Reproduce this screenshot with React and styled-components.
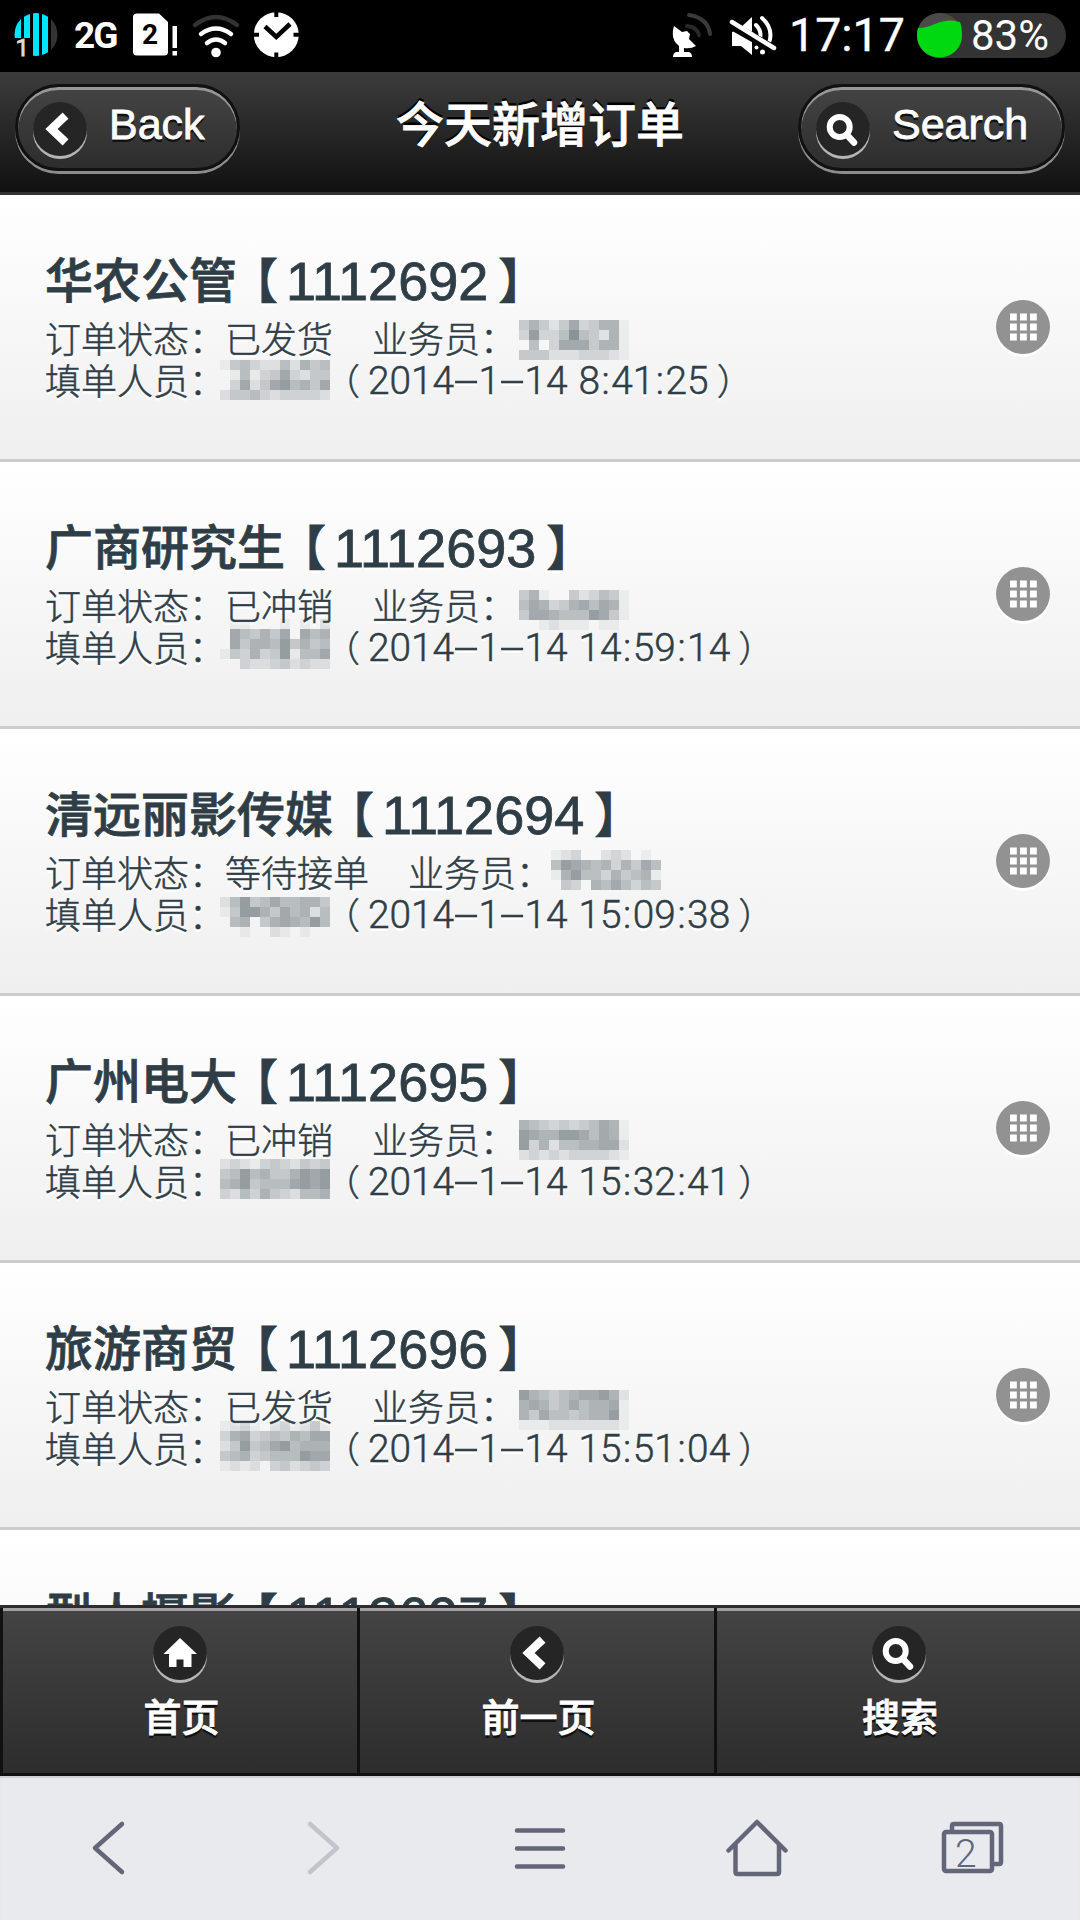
import React from "react";
import styled, { createGlobalStyle, css } from "styled-components";

const GlobalStyle = createGlobalStyle`
  * {
    box-sizing: border-box;
  }
  body {
    margin: 0;
    background: #000;
    font-family: "Liberation Sans", "Noto Sans CJK SC", sans-serif;
  }
`;

const Screen = styled.div`
  width: 1080px;
  height: 1920px;
  display: flex;
  flex-direction: column;
  overflow: hidden;
`;

const StatusBar = styled.div`
  height: 72px;
  flex: none;
  display: flex;
  justify-content: space-between;
  background: #000;
  color: #fff;
  font-family: Roboto, sans-serif;
`;

const StatusGroup = styled.div`
  display: flex;
  align-items: center;
  height: 70px;
`;

const Clock = styled.span`
  width: 131px;
  font-size: 46.5px;
  line-height: 72px;
  padding-left: 3px;
  margin-top: -1px;
  -webkit-text-stroke: 0.4px #fff;
`;

const Battery = styled.div`
  display: flex;
  align-items: center;
  width: 149px;
  height: 45px;
  margin-right: 14px;
  border-radius: 23px;
  background: #333;
  font-size: 42px;
`;

const BatteryText = styled.span`
  margin-left: 8px;
`;

const Header = styled.header`
  height: 123px;
  flex: none;
  display: flex;
  justify-content: space-between;
  padding: 12px 15px 0;
  background: linear-gradient(#3c3c3c, #111);
  border-bottom: 3px solid #333;
  color: #fff;
`;

const Title = styled.h1`
  margin: 0 0 0 42px;
  padding-top: 7px;
  font-size: 48px;
  font-weight: 500;
  line-height: 70px;
  -webkit-text-stroke: 0.8px #fff;
  text-shadow: 0 -3px 0 #000;
`;

const HeaderButton = styled.button`
  display: flex;
  align-items: flex-start;
  width: ${(props) => props.$width}px;
  height: 87px;
  padding: 15px 0 0 15px;
  border: 3px solid #111;
  border-radius: 48px;
  background: linear-gradient(#444, #2d2d2d);
  box-shadow: inset 0 3px 0 rgba(255, 255, 255, 0.45),
    0 3px 0 rgba(255, 255, 255, 0.5);
  color: #fff;
  font-family: inherit;
  font-size: 43px;
  line-height: 48px;
  -webkit-text-stroke: 0.8px #fff;
  text-shadow: 0 3px 0 #111;
`;

const HeaderLabel = styled.span`
  margin: -2px 0 0 ${(props) => props.$gap}px;
`;

const Disc = styled.span`
  flex: none;
  display: block;
  width: 54px;
  height: 54px;
  border-radius: 50%;
  background: ${(props) => (props.$light ? "#929292" : "#252525")};
  box-shadow: 0 3px 0 ${(props) => (props.$light ? "#fff" : "#b5b5b5")};

  svg {
    display: block;
  }
`;

const List = styled.ul`
  flex: 1;
  min-height: 0;
  margin: 0;
  padding: 0;
  list-style: none;
  overflow: hidden;
  background: #fff;
`;

const Item = styled.li`
  display: flex;
  justify-content: space-between;
  align-items: center;
  height: 267px;
  padding: 0 30px 0 45px;
  border-bottom: 3px solid #ccc;
  background: linear-gradient(#fff, #efefef);
  color: #2f3e46;
  text-shadow: 0 3px 0 #fff;
`;

const Info = styled.div`
  height: 264px;
  padding-top: 51px;
`;

const Name = styled.h3`
  display: flex;
  margin: 0;
  height: 70px;
  font-size: 48px;
  font-weight: 500;
  line-height: 72px;
  white-space: nowrap;
  -webkit-text-stroke: 0.8px #2f3e46;
`;

const Bracket = styled.span`
  width: 48px;
  text-indent: ${(props) => props.$shift}px;
`;

const OrderNo = styled.span`
  margin-left: 1px;
  font-size: 54px;
  line-height: 71px;
`;

const Line = styled.p`
  display: flex;
  margin: 0;
  height: 42px;
  font-size: 36px;
  line-height: 42px;
  font-weight: 300;
  font-family: "Noto Sans CJK SC", sans-serif;
  white-space: nowrap;
  -webkit-text-stroke: 0.5px #2f3e46;
`;

const Sales = styled.span`
  margin-left: 39px;
`;

const DateText = styled.span`
  font-family: Roboto, sans-serif;
  font-size: 38.8px;
  font-weight: 300;
  line-height: 45px;
  word-spacing: 1.5px;
`;

const Dash = styled.span`
  display: inline-block;
  width: 24.4px;
  text-align: center;
  transform: scaleX(2.3);
`;

const Colon = styled.span`
  display: inline-block;
  width: 11.3px;
  text-align: center;
`;

const Paren = styled.span`
  width: 36px;
  text-indent: ${(props) => props.$shift}px;
`;

const MaskBox = styled.span`
  flex: none;
  width: ${(props) => props.$width}px;
  height: 40px;

  svg {
    display: block;
    overflow: visible;
  }
`;

const Footer = styled.nav`
  flex: none;
  display: grid;
  grid-template-columns: 357px 357px 1fr;
  height: 171px;
  border-top: 3px solid #2d2d2d;
`;

const FooterButton = styled.button`
  display: flex;
  flex-direction: column;
  align-items: center;
  padding: 18px 0 0;
  border: 0 solid #111;
  border-left-width: 3px;
  border-bottom-width: 3px;
  background: linear-gradient(#444, #2d2d2d);
  box-shadow: inset 0 3px 0 #a5a2a5;
  color: #fff;
  font-family: inherit;
  font-size: 38px;
  font-weight: 500;
  line-height: 56px;
  -webkit-text-stroke: 0.8px #fff;
  text-shadow: 0 3px 0 #111;
`;

const FooterLabel = styled.span`
  margin: 10px 0 0 3px;
`;

const toolLine = css`
  fill: none;
  stroke: #626678;
  stroke-width: 4.5;
  stroke-linecap: round;
  stroke-linejoin: round;
`;

const Toolbar = styled.div`
  flex: none;
  display: grid;
  grid-template-columns: repeat(5, 1fr);
  height: 144px;
  background: #e8eaee;
  box-shadow: inset 0 2px 1px #cfcfd2;
`;

const Tool = styled.svg`
  width: 216px;
  height: 144px;
  opacity: ${(props) => (props.$disabled ? 0.28 : 1)};
  ${toolLine}

  text {
    stroke: none;
    fill: #626678;
    font-family: Roboto, sans-serif;
    font-size: 39px;
    font-weight: 300;
  }
`;

const glyphs = {
  back: (
    <path
      d="M29.5 16.5 L18.5 27 L29.5 37.5"
      fill="none"
      stroke="#fff"
      strokeWidth="8.5"
      strokeLinecap="square"
    />
  ),
  search: (
    <g fill="none" stroke="#fff">
      <circle cx="23.7" cy="25" r="10" strokeWidth="6" />
      <path d="M31 33 L38 40.5" strokeWidth="6.5" strokeLinecap="round" />
    </g>
  ),
  home: (
    <path
      d="M27 12 L44 28 H38.5 V41 H30.5 V33.5 H23.5 V41 H16 V28 H10.5 Z"
      fill="#fff"
    />
  ),
  grid: (
    <g fill="#fff">
      {[13.5, 23.5, 33.5].map((y) =>
        [14, 24, 34].map((x) => (
          <rect key={x + "-" + y} x={x} y={y} width="6.8" height="7" />
        ))
      )}
    </g>
  ),
};

const RoundIcon = ({ name, light }) => (
  <Disc $light={light}>
    <svg width="54" height="54" viewBox="0 0 54 54">
      {glyphs[name]}
    </svg>
  </Disc>
);

// Pixelated block over a person's name, one digit per 10px cell.
const Mask = ({ rows, width, left = 0, top = 0 }) => (
  <MaskBox $width={width}>
    <svg width="120" height="50" viewBox="0 0 120 50">
      <g transform={`translate(${left} ${top})`} shapeRendering="crispEdges">
        {rows.map((row, y) =>
          row.split("").map((level, x) =>
            level === "0" ? null : (
              <rect
                key={x + "-" + y}
                x={x * 10}
                y={y * 10}
                width="10"
                height="10"
                fill={`rgba(47, 62, 70, ${level * 0.06})`}
              />
            )
          )
        )}
      </g>
    </svg>
  </MaskBox>
);

const orders = [
  {
    name: "华农公管",
    no: "1112692",
    status: "已发货",
    date: "2014-1-14 8:41:25",
    sales: ["46424734661", "38335954261", "05037774661", "44422233321"],
    salesTop: 4,
    writer: ["14532252645", "01513473244", "03724785647", "24453233332"],
    writerTop: 2,
  },
  {
    name: "广商研究生",
    no: "1112693",
    status: "已冲销",
    date: "2014-1-14 14:59:14",
    sales: ["46100423541", "57634675761", "47765558741", "00121110110"],
    salesTop: 7,
    writer: ["01100010102", "07546470756", "07466584645", "14363481557", "00322342322"],
    writerTop: -6,
  },
  {
    name: "清远丽影传媒",
    no: "1112694",
    status: "等待接单",
    date: "2014-1-14 15:09:38",
    sales: ["12300232010", "58765636475", "16855364561", "04306575354"],
    salesLeft: -1,
    salesTop: 0,
    writer: ["25845755664", "14886475625", "05604676585", "00100210100"],
    writerTop: 5,
  },
  {
    name: "广州电大",
    no: "1112695",
    status: "已冲销",
    date: "2014-1-14 15:32:41",
    sales: ["65434345761", "87668875761", "83625566772", "23232333321"],
    salesTop: 3,
    writer: ["23213432434", "45856446878", "56845557878", "32536432556"],
    writerTop: 0,
  },
  {
    name: "旅游商贸",
    no: "1112696",
    status: "已发货",
    date: "2014-1-14 15:51:04",
    sales: ["86545677862", "67645756671", "64755456681", "11122222221"],
    salesTop: 6,
    writer: ["12310231241", "36734546577", "24845785666", "45634555877", "12120342343"],
    writerTop: -5,
  },
  { name: "型人摄影", no: "1112697" },
];

const separators = {
  "-": Dash,
  ":": Colon,
};

const OrderDate = ({ value }) => (
  <DateText>
    {value.split(/([-:])/).map((part, i) => {
      const Separator = separators[part];
      return Separator ? <Separator key={i}>{part}</Separator> : part;
    })}
  </DateText>
);

const OrderItem = ({ order }) => (
  <Item>
    <Info>
      <Name>
        {order.name}
        <Bracket $shift={-7}>【</Bracket>
        <OrderNo>{order.no}</OrderNo>
        <Bracket $shift={10}>】</Bracket>
      </Name>
      {order.status && (
        <>
          <Line>
            订单状态：{order.status}
            <Sales>业务员：</Sales>
            <Mask
              rows={order.sales}
              width={110}
              left={order.salesLeft || 3}
              top={order.salesTop}
            />
          </Line>
          <Line>
            填单人员：
            <Mask rows={order.writer} width={107} left={-5} top={order.writerTop} />
            <Paren $shift={-8}>（</Paren>
            <OrderDate value={order.date} />
            <Paren $shift={8}>）</Paren>
          </Line>
        </>
      )}
    </Info>
    <RoundIcon name="grid" light />
  </Item>
);

const StatusIcons = () => (
  <svg width="310" height="70" viewBox="0 0 310 70">
    <defs>
      <clipPath id="disc">
        <circle cx="36" cy="34.5" r="21.5" />
      </clipPath>
    </defs>
    <g clipPath="url(#disc)" fill="#00e5ff">
      <rect x="14" y="12" width="7" height="26" />
      <rect x="24" y="12" width="6" height="26" />
      <rect x="33" y="12" width="6" height="45" />
      <rect x="42" y="12" width="6" height="45" />
      <rect x="51" y="12" width="7" height="45" fill="#333" />
    </g>
    <text x="15.5" y="56" fill="#ddd" stroke="#ddd" strokeWidth="0.8" fontSize="24">
      1
    </text>
    <text x="74" y="48" fill="#fff" fontSize="37" fontWeight="700" letterSpacing="-2">
      2G
    </text>
    <path
      d="M137 13.5 H159 L168 22 V52 Q168 55.5 164 55.5 H137 Q133 55.5 133 52 V17 Q133 13.5 137 13.5 Z"
      fill="#fff"
    />
    <text x="142" y="44" fill="#000" fontSize="28" fontWeight="700">
      2
    </text>
    <path d="M172.5 26 H177 V48 H172.5 Z M172.5 51 H177 V55.5 H172.5 Z" fill="#fff" />
    <g fill="none" strokeWidth="4.5" strokeLinecap="round">
      <path d="M195 25 Q216 9 237 25" stroke="#333" />
      <path d="M201 34 Q216 23 231 34" stroke="#fff" />
      <path d="M207 43 Q216 36 225 43" stroke="#fff" />
    </g>
    <circle cx="216" cy="52.5" r="4.8" fill="#fff" />
    <circle cx="276.3" cy="34.7" r="22.5" fill="#fff" />
    <path
      d="M276.3 11 V17 M276.3 52.5 V59 M253 34.7 H259 M293.5 34.7 H300"
      stroke="#000"
      strokeWidth="4"
    />
    <path d="M265 26.5 L276.3 37 L290 24" stroke="#000" strokeWidth="4.5" fill="none" />
  </svg>
);

const SignalIcons = () => (
  <svg width="115" height="70" viewBox="670 0 115 70">
    <path
      d="M673 26 L681 32 L686 31 L689 34 L688 39 L695 46 Q690 49 683 48 V52 H688 Q691 53 691 57 H672 Q672 53 675 52 H678 V46 Q669 39 673 26 Z"
      fill="#fff"
    />
    <g fill="none" stroke="#3a3a3a" strokeWidth="4" strokeLinecap="round">
      <path d="M688 15 Q707 18 709 34" />
      <path d="M686 26 Q696 27 698 35" stroke="#292929" />
    </g>
    <path d="M731 32 L738 29 L751 17 V55 L740 46 H731 Z" fill="#fff" />
    <g fill="none" stroke="#fff" strokeWidth="4" strokeLinecap="round">
      <path d="M755 25 Q761 31 759 39" />
      <path d="M761 18 Q773 29 768 43" />
    </g>
    <path d="M730 25 L774 50" stroke="#000" strokeWidth="9" />
    <path d="M731 22 L773 48" stroke="#fff" strokeWidth="4.5" strokeLinecap="round" />
    <circle cx="755.5" cy="47.5" r="2" fill="#fff" />
    <circle cx="761.5" cy="52" r="2.5" fill="#fff" />
  </svg>
);

const App = () => {
  return (
    <Screen>
      <GlobalStyle />
      <StatusBar>
        <StatusGroup>
          <StatusIcons />
        </StatusGroup>
        <StatusGroup>
          <SignalIcons />
          <Clock>17:17</Clock>
          <Battery>
            <svg width="46" height="45" viewBox="0 0 46 45">
              <circle cx="22.5" cy="22.5" r="22.5" fill="#4a4a4a" />
              <path
                d="M1 15 Q9 15 18 11 Q31 5 43 9 Q45 14 45 22.5 A22.5 22 0 0 1 0 22.5 Q0 18 1 15 Z"
                fill="#00d810"
              />
            </svg>
            <BatteryText>83%</BatteryText>
          </Battery>
        </StatusGroup>
      </StatusBar>
      <Header>
        <HeaderButton $width={225}>
          <RoundIcon name="back" />
          <HeaderLabel $gap={22}>Back</HeaderLabel>
        </HeaderButton>
        <Title>今天新增订单</Title>
        <HeaderButton $width={267}>
          <RoundIcon name="search" />
          <HeaderLabel $gap={22}>Search</HeaderLabel>
        </HeaderButton>
      </Header>
      <List>
        {orders.map((order) => (
          <OrderItem key={order.no} order={order} />
        ))}
      </List>
      <Footer>
        <FooterButton>
          <RoundIcon name="home" />
          <FooterLabel>首页</FooterLabel>
        </FooterButton>
        <FooterButton>
          <RoundIcon name="back" />
          <FooterLabel>前一页</FooterLabel>
        </FooterButton>
        <FooterButton>
          <RoundIcon name="search" />
          <FooterLabel>搜索</FooterLabel>
        </FooterButton>
      </Footer>
      <Toolbar>
        <Tool viewBox="0 0 216 144">
          <path d="M122 48 L95 72 L122 96" />
        </Tool>
        <Tool viewBox="0 0 216 144" $disabled>
          <path d="M94 48 L121 72 L94 96" />
        </Tool>
        <Tool viewBox="0 0 216 144">
          <path d="M85 54.5 H131 M85 72.5 H131 M85 90.5 H131" />
        </Tool>
        <Tool viewBox="0 0 216 144">
          <path d="M80.5 74.5 L109 46 L137.5 74.5" />
          <path d="M87.5 69 V96 Q87.5 98 89.5 98 H129 Q131 98 131 96 V69" />
        </Tool>
        <Tool viewBox="0 0 216 144">
          <rect x="80" y="56" width="48" height="39" rx="2" />
          <path d="M88 54 V50 Q88 48 90 48 H135 Q137 48 137 50 V86 Q137 88 135 88 H130" />
          <text x="91" y="90.5">
            2
          </text>
        </Tool>
      </Toolbar>
    </Screen>
  );
};

export default App;
